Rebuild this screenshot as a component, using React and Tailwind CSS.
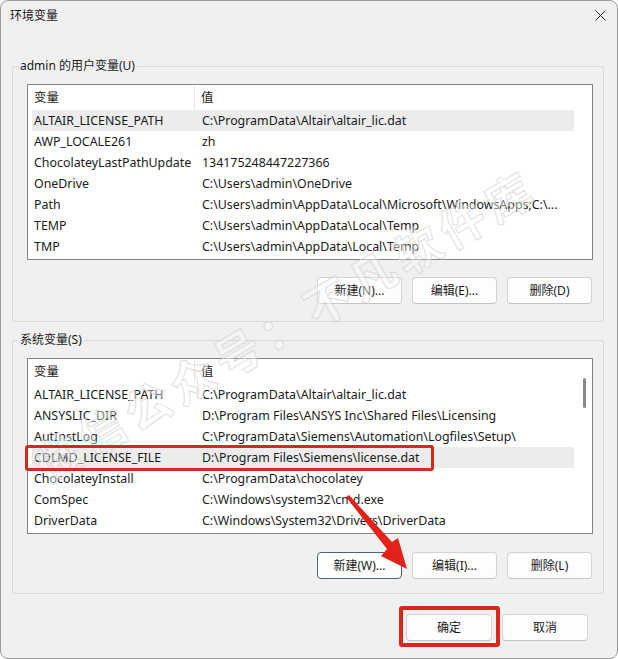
import React from "react";

const userVars = [
  ["ALTAIR_LICENSE_PATH", "C:\\ProgramData\\Altair\\altair_lic.dat"],
  ["AWP_LOCALE261", "zh"],
  ["ChocolateyLastPathUpdate", "134175248447227366"],
  ["OneDrive", "C:\\Users\\admin\\OneDrive"],
  ["Path", "C:\\Users\\admin\\AppData\\Local\\Microsoft\\WindowsApps;C:\\..."],
  ["TEMP", "C:\\Users\\admin\\AppData\\Local\\Temp"],
  ["TMP", "C:\\Users\\admin\\AppData\\Local\\Temp"],
];

const sysVars = [
  ["ALTAIR_LICENSE_PATH", "C:\\ProgramData\\Altair\\altair_lic.dat"],
  ["ANSYSLIC_DIR", "D:\\Program Files\\ANSYS Inc\\Shared Files\\Licensing"],
  ["AutInstLog", "C:\\ProgramData\\Siemens\\Automation\\Logfiles\\Setup\\"],
  ["CDLMD_LICENSE_FILE", "D:\\Program Files\\Siemens\\license.dat"],
  ["ChocolateyInstall", "C:\\ProgramData\\chocolatey"],
  ["ComSpec", "C:\\Windows\\system32\\cmd.exe"],
  ["DriverData", "C:\\Windows\\System32\\Drivers\\DriverData"],
];

const Btn = ({ children, focused, w = "w-[85px]" }) => (
  <button
    className={`${w} h-[27px] rounded-[4px] bg-[#fdfdfd] text-[12px] text-[#1a1a1a] border ${
      focused ? "border-[#4d6470]" : "border-[#d3d3d3] border-b-[#c4c4c4]"
    }`}
  >
    {children}
  </button>
);

const VarList = ({ rows, selected, scroll }) => (
  <div className="h-[176px] border border-[#838383] bg-white overflow-hidden flex text-[12.4px]">
    <div className="flex-1 pl-[4px]">
      {/* header */}
      <div className="h-[25px] flex items-center pt-[1px]">
        <div className="w-[163px] h-full flex items-center pl-[2px] border-r border-[#e6e6e6]">变量</div>
        <div className="pl-[6px]">值</div>
      </div>
      {rows.map(([k, v], i) => (
        <div
          key={k}
          className={`h-[21px] flex items-center pt-[1px] whitespace-nowrap ${i === selected ? "bg-[#ececec]" : ""}`}
        >
          <div className="w-[170px] pl-[2px]">{k}</div>
          <div>{v}</div>
        </div>
      ))}
    </div>
    <div className="w-[18px] pt-[19px] pl-[9px]">
      {scroll && <div className="w-[3px] h-[30px] rounded-full bg-[#8a8a8a]" />}
    </div>
  </div>
);

const Group = ({ label, children, cls }) => (
  <fieldset className={`border border-[#d9d9d9] rounded-[2px] ${cls}`}>
    <legend className="ml-[5px] px-[2px] h-[16px] leading-[16px] text-[12px]">{label}</legend>
    {children}
  </fieldset>
);

export default function App() {
  return (
    <div className="relative w-[618px] h-[659px] overflow-hidden bg-white font-['Noto_Sans','Noto_Sans_CJK_SC',sans-serif] text-[12px] text-[#1a1a1a]">
      <div className="w-full h-full bg-[#f0f0f0] border border-[#9c9c9c] rounded-[8px]">
        {/* title bar */}
        <div className="h-[29px] flex items-center justify-between pl-[9px] pr-[10px]">
          <span className="text-[12px]">环境变量</span>
          <svg width="11" height="11" viewBox="0 0 11 11" className="mr-[1px]">
            <path d="M0.5 0.5 L10.5 10.5 M10.5 0.5 L0.5 10.5" stroke="#222" strokeWidth="1" />
          </svg>
        </div>

        <div className="pt-[28px] pl-[11px] pr-[13px]">
          <Group label="admin 的用户变量(U)">
            <div className="pt-[10px] pl-[14px] pr-[10px] pb-[17px]">
              <VarList rows={userVars} selected={0} />
              <div className="mt-[17px] flex justify-end gap-[10px] pr-[1px]">
                <Btn>新建(N)...</Btn>
                <Btn>编辑(E)...</Btn>
                <Btn>删除(D)</Btn>
              </div>
            </div>
          </Group>

          <Group label="系统变量(S)" cls="mt-[10px]">
            <div className="pt-[10px] pl-[14px] pr-[10px] pb-[14px]">
              <VarList rows={sysVars} selected={3} scroll />
              <div className="mt-[18px] flex justify-end gap-[10px] pr-[1px]">
                <Btn focused>新建(W)...</Btn>
                <Btn>编辑(I)...</Btn>
                <Btn>删除(L)</Btn>
              </div>
            </div>
          </Group>

          <div className="mt-[20px] flex justify-end gap-[10px] pr-[16px]">
            <Btn w="w-[86px]">确定</Btn>
            <Btn w="w-[86px]">取消</Btn>
          </div>
        </div>
      </div>

      {/* watermark */}
      <div className="pointer-events-none absolute left-[285px] top-[326px] -translate-x-1/2 -translate-y-1/2 -rotate-[30deg] whitespace-nowrap text-[46px] font-bold tracking-[6px] text-white/60 [-webkit-text-stroke:1px_#d4d4d4] opacity-70">
        微信公众号：不凡软件库
      </div>

      {/* annotations */}
      <div className="absolute left-[25px] top-[445px] w-[409px] h-[26px] border-[3px] border-[#d6281e] rounded-[3px]" />
      <div className="absolute left-[399px] top-[606px] w-[101px] h-[41px] border-[4px] border-[#d6281e] rounded-[3px]" />
      <svg className="absolute left-0 top-0 pointer-events-none" width="618" height="659">
        <polygon
          points="346,497 349,495 392,542 398,538 407,569 381,556 387,549"
          fill="#e3231b"
        />
      </svg>
    </div>
  );
}
